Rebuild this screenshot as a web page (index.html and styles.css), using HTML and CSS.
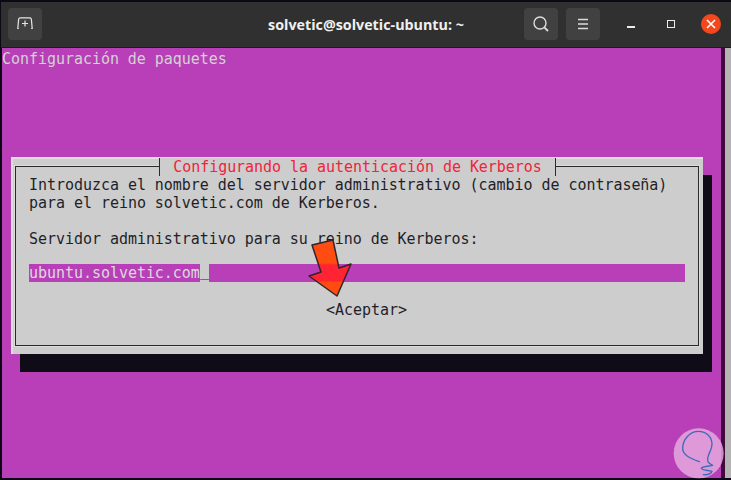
FILE: index.html
```html
<!DOCTYPE html>
<html lang="es">
<head>
<meta charset="utf-8">
<title>solvetic@solvetic-ubuntu: ~</title>
<link rel="stylesheet" href="styles.css">
</head>
<body>
<div class="window">
  <header class="titlebar">
    <div class="tb-left">
      <button class="tb-btn tb-new" aria-label="Nueva pestaña">
        <svg width="16" height="14" viewBox="0 0 16 14" fill="none" stroke="#e6e6e6" stroke-width="1.2"><path d="M.8 11.5 1.6 2.6Q1.7 .8 3.4 .8H12.6Q14.3 .8 14.4 2.6L15.2 11.5"/><path d="M.3 11.5H1.8M14.2 11.5H15.7"/><path d="M8 3.5V9.5M5 6.5H11"/></svg>
      </button>
    </div>
    <div class="tb-title">solvetic@solvetic-ubuntu: ~</div>
    <div class="tb-right">
      <button class="tb-btn" aria-label="Buscar">
        <svg width="16" height="16" viewBox="0 0 16 16" fill="none" stroke="#dcdcdc" stroke-width="1.4"><circle cx="7" cy="7" r="6"/><path d="M11.3 11.3 15 15" stroke-width="1.8"/></svg>
      </button>
      <button class="tb-btn" aria-label="Menú">
        <svg width="12" height="12" viewBox="0 0 12 12" stroke="#dcdcdc" stroke-width="1.3"><path d="M1 1.5H11M1 6H11M1 10.5H11"/></svg>
      </button>
      <div class="wm">
        <span class="wm-min"></span>
        <span class="wm-max"></span>
        <span class="wm-close">
          <svg width="10" height="10" viewBox="0 0 10 10" stroke="#fff" stroke-width="1.6"><path d="M1 1 9 9M9 1 1 9"/></svg>
        </span>
      </div>
    </div>
  </header>
  <div class="terminal">
    <main class="screen">
      <div class="pkg">Configuración de paquetes</div>
      <section class="dialog">
        <div class="frame">
          <div class="legend">Configurando la autenticación de Kerberos</div>
          <p class="row">Introduzca el nombre del servidor administrativo (cambio de contraseña)</p>
          <p class="row">para el reino solvetic.com de Kerberos.</p>
          <p class="row">&nbsp;</p>
          <p class="row">Servidor administrativo para su reino de Kerberos:</p>
          <p class="row row-before-field">&nbsp;</p>
          <div class="field">
            <span class="value">ubuntu.solvetic.com</span>
            <span class="cursor">_</span>
            <span class="rest"></span>
          </div>
          <p class="row row-after-field">&nbsp;</p>
          <div class="ok">&lt;Aceptar&gt;</div>
        </div>
      </section>
    </main>
    <div class="scroll-trough"><div class="scroll-thumb"></div></div>
  </div>
  <svg class="arrow" width="160" height="100" viewBox="0 0 160 100">
    <defs>
      <linearGradient id="band" x1="0" y1="0" x2="0" y2="100" gradientUnits="userSpaceOnUse">
        <stop offset="0.33" stop-color="#ff4c10"/>
        <stop offset="0.35" stop-color="#ff2333"/>
        <stop offset="0.51" stop-color="#ff2333"/>
        <stop offset="0.52" stop-color="#ff4c10"/>
      </linearGradient>
    </defs>
    <polygon points="32,15 53,10 59,38 71,34 57,66 29,46 41,42" fill="url(#band)" stroke="#33242a" stroke-width="1.5" stroke-linejoin="round"/>
  </svg>
  <svg class="mark" width="91" height="80" viewBox="0 0 273 240">
    <circle cx="176" cy="160" r="75" fill="#e9b0e0" fill-opacity=".8"/>
    <path d="M175 94C150 94 128 118 128 145C128 165 150 175 178 185M175 94C200 94 216 112 216 132C216 150 205 160 203 175C202 186 205 190 218 196C205 200 188 198 184 205C190 213 205 210 216 214C212 222 200 225 190 224" fill="none" stroke="#3c6cb8" stroke-width="4" stroke-linecap="round" stroke-linejoin="round"/>
  </svg>
</div>
</body>
</html>
```
FILE: styles.css
```css
* { box-sizing: border-box; }
html, body { margin: 0; padding: 0; }
body { width: 731px; height: 480px; overflow: hidden; background: #000; }
.window {
  position: relative;
  width: 731px;
  height: 480px;
  display: flex;
  flex-direction: column;
  background: #0b0714;
  padding: 2px 0 2px 1px;
}
.titlebar {
  height: 46px;
  flex: none;
  background: #303030;
  border-bottom: 1px solid #1d1a1d;
  display: flex;
  align-items: center;
  justify-content: space-between;
  padding: 0 0 1px 7px;
  color: #fff;
}
.tb-left, .tb-right { display: flex; align-items: center; }
.tb-btn {
  width: 34px;
  height: 32px;
  padding: 0;
  border: 0;
  border-radius: 4px;
  background: #414141;
  display: flex;
  align-items: center;
  justify-content: center;
}
.tb-new svg { margin-top: -1px; }
.tb-right { gap: 8px; }
.tb-title {
  flex: 1;
  text-align: center;
  font: 700 14.3px "Open Sans", "Noto Sans", sans-serif;
  color: #f0f0f0;
  padding-left: 166px;
}
.wm { display: flex; align-items: center; margin-left: 19px; width: 104px; height: 32px; }
.wm-min { width: 8px; height: 2px; background: #ececec; margin: 6px 0 0 0; }
.wm-max { width: 8px; height: 8px; border: 1.5px solid #ececec; margin-left: 32px; }
.wm-close {
  width: 20px;
  height: 20px;
  border-radius: 50%;
  background: #f4481c;
  margin-left: 26px;
  display: flex;
  align-items: center;
  justify-content: center;
}
.terminal { flex: 1; display: flex; min-height: 0; padding-left: 1px; background: #0b0714; }
.screen {
  width: 719px;
  background: #b93fb9;
  padding: 0;
  font: 15px/18px "DejaVu Sans Mono", "Liberation Mono", monospace;
  letter-spacing: -0.04px;
  overflow: hidden;
}
.pkg { color: #d2d2d2; height: 18px; margin-top: 2px; white-space: pre; }
.dialog {
  margin: 89px 0 0 9px;
  width: 692px;
  height: 197px;
  background: #cdcdcd;
  border-top: 2px solid #dedede;
  border-left: 2px solid #dedede;
  box-shadow: 9px 18px 0 #0f0c17;
  padding: 7px 4px 0 2px;
}
.frame {
  position: relative;
  height: 180px;
  border: 1px solid #2a2a2a;
  box-shadow: 0 0 0 1px #eeeeee66;
  padding: 9px 0 0 13px;
  color: #1f1f29;
}
.legend {
  position: absolute;
  top: -9px;
  left: 143px;
  width: 397px;
  height: 18px;
  background: #cdcdcd;
  color: #f0243c;
  border-left: 1px solid #2a2a2a;
  border-right: 1px solid #2a2a2a;
  text-align: center;
  line-height: 18px;
  white-space: pre;
}
.row { margin: 0; height: 18px; white-space: pre; }
.row-before-field { height: 16px; }
.row-after-field { height: 19px; }
.field { display: flex; height: 18px; width: 656px; color: #dadada; }
.value { background: #b93fb9; width: 171px; white-space: pre; }
.cursor { width: 9px; color: #1f1f29; line-height: 14px; }
.rest { flex: 1; background: #b93fb9; }
.ok { text-align: center; padding-left: 17px; width: 684px; margin-left: -13px; }
.scroll-trough { width: 10px; background: #43093f; padding: 0 0 0 4px; }
.scroll-thumb { width: 6px; height: 100%; background: #b4b4b4; }
.arrow { position: absolute; left: 280px; top: 230px; }
.mark { position: absolute; left: 640px; top: 400px; }
```
